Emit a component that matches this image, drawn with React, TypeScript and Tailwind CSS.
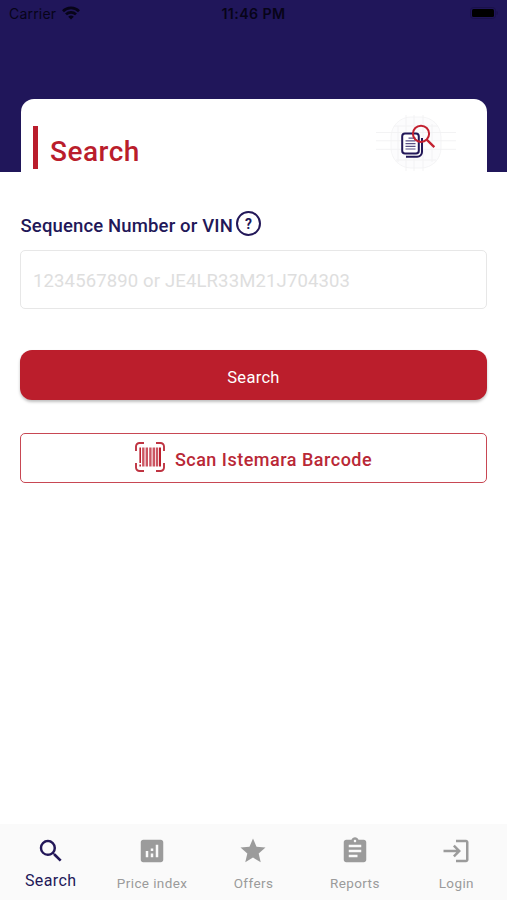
import type { ReactNode } from "react";
import { MdAnalytics, MdAssignment, MdLogin, MdSearch, MdStar } from "react-icons/md";

function StatusBar() {
  return (
    <div className="grid h-7 grid-cols-3 items-center pl-[9px] pr-[9px] text-[14px] leading-7 text-[#070418]">
      <div className="flex items-center gap-[6px]">
        <span className="font-['Inter',sans-serif] text-[14px] tracking-[0.2px]">Carrier</span>
        <svg className="-mt-[2px]" width="18" height="14" viewBox="0 0 18 14" fill="none" stroke="currentColor" strokeWidth="2.7">
          <path d="M1 5.2a11.4 11.4 0 0 1 16 0" />
          <path d="M4 8.4a7.1 7.1 0 0 1 10 0" />
          <path d="M9 13.6 6.2 10.8a4 4 0 0 1 5.6 0Z" fill="currentColor" stroke="none" />
        </svg>
      </div>
      <span className="whitespace-nowrap text-center font-['Inter',sans-serif] text-[14.2px] font-semibold tracking-[0.4px]">11:46 PM</span>
      <div className="flex justify-end">
        <svg className="-mt-[2px]" width="28" height="12" viewBox="0 0 28 12">
          <rect x="0.5" y="0.5" width="25" height="11" rx="3" fill="none" stroke="#1a114b" />
          <rect x="2" y="2" width="22" height="8" rx="1.5" fill="#000" />
          <path d="M26.5 4v4q1.5-.6 1.5-2t-1.5-2" fill="#1a114b" />
        </svg>
      </div>
    </div>
  );
}

function ReportSearchArt() {
  return (
    <svg width="80" height="56" viewBox="376 115 80 56" fill="none">
      <rect x="391" y="117" width="50" height="51" rx="20" fill="#fcfcfd" stroke="#f3f3f4" strokeWidth="0.8" />
      <path
        d="M376 132.5h80M376 140.8h80M376 149.3h80M394 126h44M396 160h40M398 126v36M406 112v59M414 115v56M423 112v59M432 124v38"
        stroke="#f2f2f3"
        strokeWidth="0.9"
      />
      <path d="M406 156.8h11.2a4.8 4.8 0 0 0 4.8-4.8V138" stroke="#221758" strokeWidth="2" />
      <rect x="402.2" y="133.6" width="16.6" height="20" rx="2.8" fill="#fff" stroke="#221758" strokeWidth="2" />
      <path d="M408.5 138.2h7M405.5 140.9h10M405.5 143.6h10M405.5 146.3h10M405.5 149h10" stroke="#5b5286" strokeWidth="1.2" />
      <circle cx="421" cy="133.8" r="8.1" stroke="#c3202f" strokeWidth="2" />
      <path d="m426.7 139.6 7.6 7.5" stroke="#c3202f" strokeWidth="2.3" />
    </svg>
  );
}

function BarcodeIcon() {
  return (
    <svg className="-mt-[2px]" width="30" height="30" viewBox="0 0 30 30" fill="none">
      <path
        d="M1 9V4.5A3.5 3.5 0 0 1 4.5 1H9M21 1h4.5A3.5 3.5 0 0 1 29 4.5V9M29 21v4.5a3.5 3.5 0 0 1-3.5 3.5H21M9 29H4.5A3.5 3.5 0 0 1 1 25.5V21"
        stroke="#bf3442"
        strokeWidth="1.9"
      />
      <path d="M5.2 5.5V21M5.2 22.5v2" stroke="#bc1f2d" strokeWidth="1.6" />
      <path d="M8.3 5.5v19M11.8 5.500v19M15.4 5.500v19M18.8 5.500v19M22 5.500v19" stroke="#cb5562" strokeWidth="2.4" />
      <path d="M25 5.500v19" stroke="#bc1f2d" strokeWidth="2" />
    </svg>
  );
}

function Tab({ icon, label, active = false }: { icon: ReactNode; label: string; active?: boolean }) {
  return (
    <button className={active ? "flex flex-col items-center text-[#221758]" : "flex flex-col items-center text-[#9b9b9b]"}>
      <span className="mt-[11px] block text-[30px]">{icon}</span>
      <span
        className={
          active
            ? "mt-[4px] whitespace-nowrap text-[16px] leading-[22px] tracking-[0.4px]"
            : "mt-[6px] whitespace-nowrap text-[13.5px] leading-[22px] tracking-[0.4px]"
        }
      >
        {label}
      </span>
    </button>
  );
}

export default function App() {
  return (
    <div className="flex h-[900px] w-full flex-col overflow-hidden bg-white font-['Roboto',sans-serif]">
      <header className="flex h-[172px] shrink-0 flex-col justify-between bg-[#20165a]">
        <StatusBar />
        <div className="ml-[21px] mr-5 flex h-[73px] items-start justify-between rounded-t-[13px] bg-white pl-3 pr-[31px]">
          <div className="mt-[27px] flex h-[43px] items-center gap-[12px]">
            <span className="h-full w-[5px] bg-[#ba1d2c]" />
            <h1 className="mt-[9px] text-[28px] font-medium leading-8 tracking-[0.5px] text-[#ba1d2c]">Search</h1>
          </div>
          <div className="mt-4">
            <ReportSearchArt />
          </div>
        </div>
      </header>

      <main className="flex flex-1 flex-col px-5 pt-[38px]">
        <div className="flex h-[27px] items-center gap-[3px] text-[#221758]">
          <label htmlFor="vin" className="ml-[0.5px] mt-[4px] whitespace-nowrap text-[18.5px] font-medium leading-6 tracking-[0.15px]">
            Sequence Number or VIN
          </label>
          <span className="flex size-[25px] items-center justify-center rounded-full border-2 border-[#221758] text-[14px] font-bold leading-none">
            ?
          </span>
        </div>
        <input
          id="vin"
          className="mt-[13px] h-[59px] w-full shrink-0 rounded-[5px] border-[1.5px] border-[#e7e7e7] px-3 pt-[2px] text-[18.5px] tracking-[0.14px] outline-none placeholder:text-[#dedede]"
          placeholder="1234567890 or JE4LR33M21J704303"
        />
        <button className="mt-[41px] h-[50px] shrink-0 rounded-[12px] bg-[#bb1e2c] pt-[6px] text-[16.5px] tracking-[0.3px] text-white shadow-[0_2px_3px_rgba(0,0,0,0.25)]">
          Search
        </button>
        <button className="mt-[33px] flex h-[50px] shrink-0 items-center justify-center gap-[10px] rounded-[5px] border-[1.5px] border-[#c84753] text-[18px] font-medium tracking-[0.5px] text-[#b92836]">
          <BarcodeIcon />
          <span className="mt-[3px] whitespace-nowrap">Scan Istemara Barcode</span>
        </button>
      </main>

      <nav className="grid h-[75px] shrink-0 grid-cols-5 items-start bg-[#fafafa] shadow-[0_-1px_1px_rgba(0,0,0,0.02)]">
        <Tab icon={<MdSearch />} label="Search" active />
        <Tab icon={<MdAnalytics />} label="Price index" />
        <Tab icon={<MdStar />} label="Offers" />
        <Tab icon={<MdAssignment />} label="Reports" />
        <Tab icon={<MdLogin />} label="Login" />
      </nav>
    </div>
  );
}
